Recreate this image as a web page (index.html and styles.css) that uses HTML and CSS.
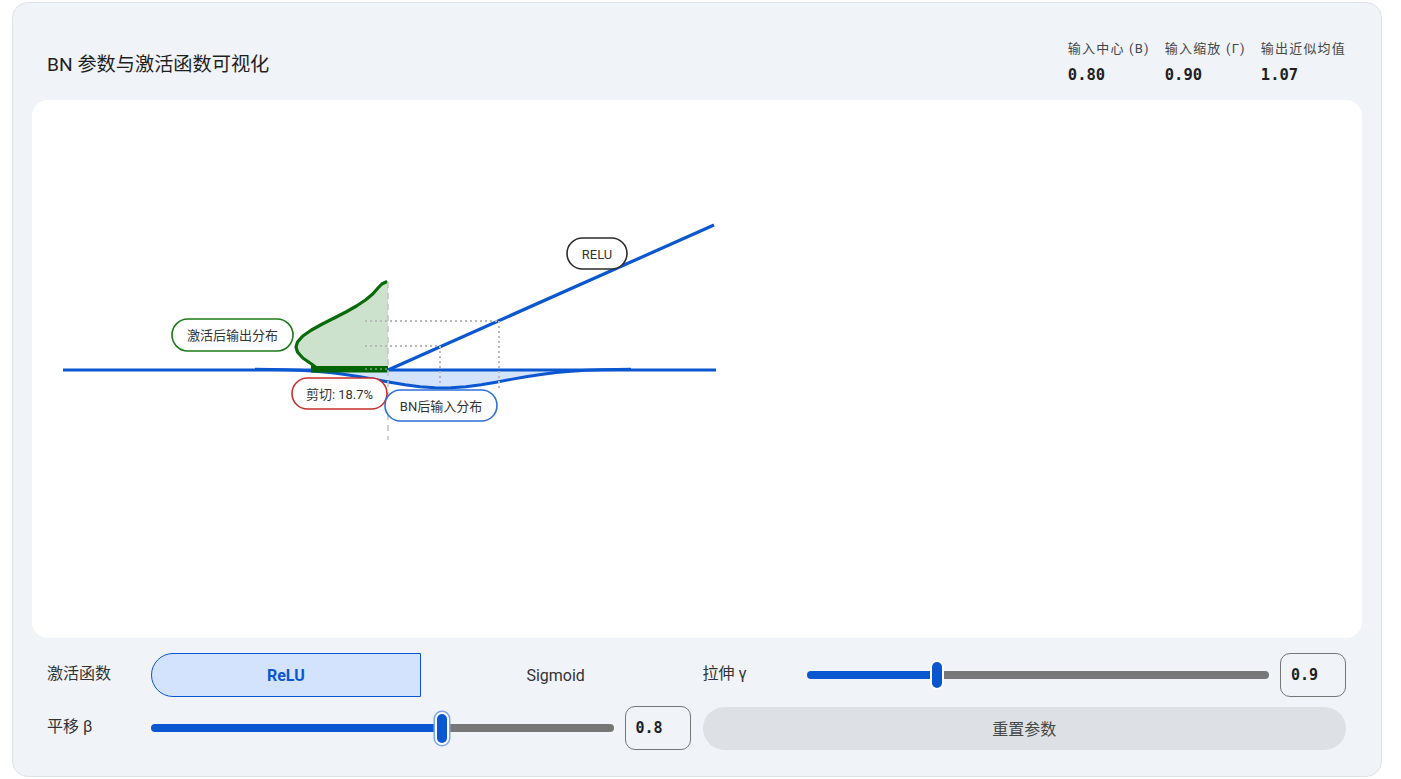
FILE: index.html
```
<!DOCTYPE html>
<html lang="zh-CN">
<head>
    <meta charset="UTF-8">
    <meta name="viewport" content="width=device-width, initial-scale=1.0">
    <title>BN 参数与激活函数可视化</title>
    <link rel="stylesheet" href="styles.css">
</head>
<body>
    <div class="panel">
        <!-- 标题与统计 -->
        <div class="panel-head">
            <h2 class="panel-title">BN 参数与激活函数可视化</h2>
            <div class="stats">
                <div class="stat">
                    <div class="stat-label">输入中心 (B)</div>
                    <div class="stat-value">0.80</div>
                </div>
                <div class="stat">
                    <div class="stat-label">输入缩放 (Γ)</div>
                    <div class="stat-value">0.90</div>
                </div>
                <div class="stat">
                    <div class="stat-label">输出近似均值</div>
                    <div class="stat-value">1.07</div>
                </div>
            </div>
        </div>

        <!-- 图表 -->
        <div class="plot">
            <svg class="plot-svg" viewBox="32 100 1330 538" preserveAspectRatio="xMinYMin meet">
                <!-- BN 后输入分布 -->
                <path class="in-fill" d="M255,369 L255,369.2 L270,369.4 L285,369.7 L300,370.3 L315,371.3 L330,372.6 L345,374.4 L360,376.8 L375,379.4 L390,382.2 L405,384.7 L420,386.7 L435,387.8 L443,388 L451,387.8 L466,386.7 L481,384.7 L496,382.2 L511,379.4 L526,376.8 L541,374.4 L556,372.6 L571,371.3 L586,370.3 L601,369.7 L616,369.4 L631,369.2 L631,369 Z"/>
                <path class="in-line" d="M255,369.2 L270,369.4 L285,369.7 L300,370.3 L315,371.3 L330,372.6 L345,374.4 L360,376.8 L375,379.4 L390,382.2 L405,384.7 L420,386.7 L435,387.8 L443,388 L451,387.8 L466,386.7 L481,384.7 L496,382.2 L511,379.4 L526,376.8 L541,374.4 L556,372.6 L571,371.3 L586,370.3 L601,369.7 L616,369.4 L631,369.2"/>

                <!-- 激活函数曲线 -->
                <line class="fn-line" x1="63" y1="370" x2="716" y2="370"/>
                <line class="fn-line" x1="388" y1="370" x2="714" y2="225"/>

                <!-- 激活后输出分布 -->
                <path class="out-fill" d="M388,282 L381.8,282 L378,288 L372.7,294 L365.5,300 L356.5,306 L345.9,312 L334.2,318 L322.3,324 L311.5,330 L302.8,336 L297.5,342 L296,347 L297.5,352 L302.8,358 L311.5,364 L320.4,369 L388,369 Z"/>
                <path class="out-line" d="M386,282 L381.8,284 L378,288 L372.7,294 L365.5,300 L356.5,306 L345.9,312 L334.2,318 L322.3,324 L311.5,330 L302.8,336 L297.5,342 L296,347 L297.5,352 L302.8,358 L311.5,364 L318,369"/>
                <line class="clip-bar" x1="311" y1="369.3" x2="388" y2="369.3"/>

                <!-- 辅助线 -->
                <line class="guide" x1="365" y1="321" x2="499" y2="321"/>
                <line class="guide" x1="365" y1="346" x2="440" y2="346"/>
                <line class="guide faint" x1="365" y1="369" x2="388" y2="369"/>
                <line class="guide" x1="440" y1="346" x2="440" y2="384"/>
                <line class="guide" x1="499" y1="321" x2="499" y2="390"/>
                <line class="zero-line" x1="388" y1="282" x2="388" y2="440"/>

                <!-- 标注 -->
                <g class="tag tag-fn">
                    <rect x="567" y="238" width="60" height="31" rx="15.5"/>
                    <text x="597" y="254">RELU</text>
                </g>
                <g class="tag tag-out">
                    <rect x="172" y="319" width="121" height="32" rx="16"/>
                    <text x="232.5" y="335.5">激活后输出分布</text>
                </g>
                <g class="tag tag-clip">
                    <rect x="292" y="378" width="95" height="31" rx="15.5"/>
                    <text x="339.5" y="394">剪切: 18.7%</text>
                </g>
                <g class="tag tag-in">
                    <rect x="385" y="390" width="112" height="31" rx="15.5"/>
                    <text x="441" y="406">BN后输入分布</text>
                </g>
            </svg>
        </div>

        <!-- 参数控制 -->
        <div class="controls">
            <label class="ctl-label">激活函数</label>
            <div class="seg">
                <button class="seg-btn active">ReLU</button>
                <button class="seg-btn">Sigmoid</button>
            </div>

            <label class="ctl-label">拉伸 γ</label>
            <div class="range-row">
                <input class="range" type="range" min="0.1" max="3" step="0.1" value="0.9" style="--p: 0.274">
                <span class="range-val">0.9</span>
            </div>

            <label class="ctl-label">平移 β</label>
            <div class="range-row">
                <input class="range focused" type="range" min="-3" max="3" step="0.1" value="0.8" style="--p: 0.633">
                <span class="range-val">0.8</span>
            </div>

            <button class="reset">重置参数</button>
        </div>
    </div>
</body>
</html>
```

FILE: styles.css
```
body {
    margin: 0;
    padding: 2px 0 0 12px;
    font-family: Roboto, "Noto Sans CJK SC", sans-serif;
    background-color: #ffffff;
    color: #1f1f1f;
}
.panel {
    box-sizing: border-box;
    width: 1370px;
    padding: 19px 19px 26px;
    background-color: #f0f3f8;
    border: 1px solid #dde3ea;
    border-radius: 16px;
}
.panel-head {
    box-sizing: border-box;
    height: 78px;
    padding: 4px 16px 0 15px;
    display: flex;
    justify-content: space-between;
    align-items: center;
}
.panel-title {
    margin: 0;
    font-size: 19.2px;
    font-weight: 400;
    color: #1f1f1f;
}
.stats {
    display: flex;
    gap: 15px;
}
.stat-label {
    font-size: 13px;
    line-height: 16px;
    letter-spacing: 1.2px;
    color: #444746;
}
.stat-value {
    margin-top: 8px;
    font-family: "DejaVu Sans Mono", monospace;
    font-size: 15.5px;
    line-height: 20px;
    font-weight: bold;
    color: #1f1f1f;
}
.plot {
    height: 538px;
    background-color: #ffffff;
    border-radius: 16px;
    overflow: hidden;
}
.plot-svg {
    display: block;
    width: 100%;
    height: 100%;
}
.in-fill {
    fill: #d3e3fd;
}
.in-line {
    fill: none;
    stroke: #0b57d0;
    stroke-width: 3;
    stroke-linejoin: round;
}
.fn-line {
    stroke: #0b57d0;
    stroke-width: 3.2;
}
.out-fill {
    fill: #cde2cd;
}
.out-line {
    fill: none;
    stroke: #0a6b0a;
    stroke-width: 3.2;
    stroke-linejoin: round;
    stroke-linecap: round;
}
.clip-bar {
    stroke: #006400;
    stroke-width: 6.5;
}
.guide {
    stroke: #b8b8b8;
    stroke-width: 2;
    stroke-dasharray: 2 3;
}
.guide.faint {
    stroke: #5f8f5f;
}
.zero-line {
    stroke: #c4c4c4;
    stroke-width: 1.5;
    stroke-dasharray: 6 5;
}
.tag rect {
    fill: #ffffff;
    stroke-width: 1.6;
}
.tag text {
    font-family: Roboto, "Noto Sans CJK SC", sans-serif;
    font-size: 13px;
    fill: #333333;
    text-anchor: middle;
    dominant-baseline: central;
}
.tag-fn rect {
    stroke: #2b2b2b;
}
.tag-out rect {
    stroke: #1b7a1b;
}
.tag-clip rect {
    stroke: #c5302b;
}
.tag-in rect {
    stroke: #2f6fdc;
}
.controls {
    margin-top: 15px;
    padding: 0 16px 0 15px;
    display: grid;
    grid-template-columns: 92px 1fr 92px 1fr;
    grid-auto-rows: 44px;
    column-gap: 12px;
    row-gap: 9px;
    align-items: center;
}
.ctl-label {
    font-size: 16px;
    line-height: 20px;
    padding-bottom: 3px;
    color: #333333;
}
.seg {
    display: flex;
    height: 44px;
}
.seg-btn {
    flex: 1;
    font-family: inherit;
    font-size: 16px;
    color: #333333;
    background: none;
    border: 1px solid transparent;
    cursor: pointer;
}
.seg-btn.active {
    background-color: #d3e3fd;
    border-color: #0b57d0;
    border-radius: 22px 0 0 22px;
    color: #0b57d0;
    font-weight: bold;
}
.range-row {
    display: flex;
    align-items: center;
    gap: 11px;
}
.range {
    flex: 1;
    margin: 0;
    height: 8px;
    -webkit-appearance: none;
    appearance: none;
    border-radius: 4px;
    background: linear-gradient(to right,
        #0b57d0 calc(7px + (100% - 14px) * var(--p)),
        #777777 calc(7px + (100% - 14px) * var(--p)));
    outline: none;
}
.range::-webkit-slider-thumb {
    -webkit-appearance: none;
    appearance: none;
    box-sizing: border-box;
    width: 14px;
    height: 30px;
    border-radius: 7px;
    background-color: #0b57d0;
    border: 2px solid #ffffff;
    cursor: pointer;
}
.range.focused::-webkit-slider-thumb {
    height: 33px;
    box-shadow: 0 0 0 1.5px #79a6ee;
}
.range-val {
    box-sizing: border-box;
    width: 66px;
    height: 44px;
    padding-left: 10px;
    display: flex;
    align-items: center;
    border: 1px solid #747775;
    border-radius: 10px;
    font-family: "DejaVu Sans Mono", monospace;
    font-size: 15px;
    font-weight: bold;
    color: #1f1f1f;
}
.reset {
    grid-column: 3 / 5;
    height: 43px;
    font-family: inherit;
    font-size: 16px;
    color: #444746;
    background-color: #dde1e5;
    border: none;
    border-radius: 22px;
    cursor: pointer;
}
```
